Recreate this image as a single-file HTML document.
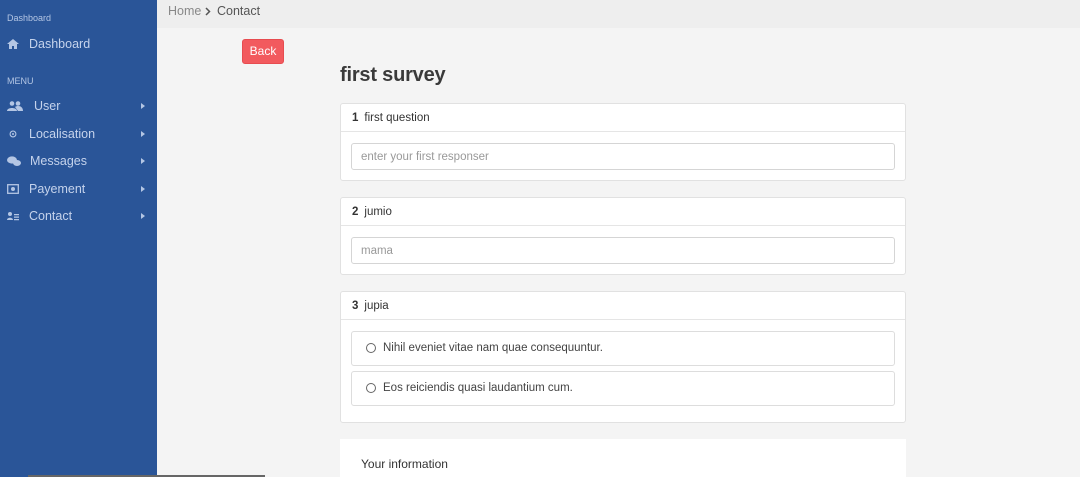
<!DOCTYPE html>
<html><head><style>
*{box-sizing:border-box;margin:0;padding:0}
html,body{width:1080px;height:477px;overflow:hidden}
body{background:#f4f4f4;font-family:"Liberation Sans",sans-serif;position:relative;color:#444}
.sb{position:absolute;left:0;top:0;width:157px;height:477px;background:#2a5598;color:#b4c6e4}
.sb .h{position:absolute;left:7px;font-size:9px}
.it{position:absolute;left:0;width:157px;font-size:12.5px;color:#c5d3ec}
.it .ic{position:absolute;left:7px;top:2px;width:12px;height:10px}
.it .t{position:absolute;left:29px;top:0}
.it .a{position:absolute;left:141px;top:4px;width:0;height:0;border-left:4px solid #b4c6e4;border-top:3.5px solid transparent;border-bottom:3.5px solid transparent}
.top{position:absolute;left:157px;top:0;right:0;height:28px;background:#eeeeee;font-size:12.5px}
.back{position:absolute;left:242px;top:39px;width:42px;height:25px;background:#f25a5e;border-radius:3px;color:#fff;font-size:12px;text-align:center;line-height:23px;border:1px solid #e74c50}
h1{position:absolute;left:340px;top:64px;font-size:20px;font-weight:bold;color:#3a3a3a;letter-spacing:-0.2px}
.card{position:absolute;left:340px;width:566px;background:#fff;border:1px solid #e1e1e1;border-radius:3px}
.ch{height:28px;border-bottom:1px solid #e5e5e5;font-size:11.5px;line-height:28px;padding-left:11px;color:#333}
.ch b{margin-right:6px}
.inp{position:absolute;left:10px;width:544px;height:27px;border:1px solid #d5d5d5;border-radius:3px;font-size:11.5px;color:#999;line-height:27px;padding-left:9px}
.opt{position:absolute;left:10px;width:544px;height:35px;border:1px solid #ddd;border-radius:3px;font-size:11.5px;color:#444;line-height:33px;padding-left:31px}
.opt:before{content:"";position:absolute;left:14px;top:11px;width:8px;height:8px;border:1px solid #666;border-radius:50%}
</style></head><body>
<div class="sb">
<div class="h" style="top:13px">Dashboard</div>
<div class="it" style="top:37px"><svg class="ic" viewBox="0 0 12 10"><path d="M6 0L0 5h2v5h3V7h2v3h3V5h2z" fill="#b4c6e4"/></svg><span class="t">Dashboard</span></div>
<div class="h" style="top:76px">MENU</div>
<div class="it" style="top:99px"><svg class="ic" style="width:16px" viewBox="0 0 16 10"><circle cx="5" cy="2.5" r="2.3" fill="#b4c6e4"/><circle cx="11" cy="2.5" r="2.3" fill="#b4c6e4"/><path d="M0 10c0-4 10-4 10 0zM8 6c3-2 8-1 8 4h-5z" fill="#b4c6e4"/></svg><span class="t" style="left:34px">User</span><i class="a"></i></div>
<div class="it" style="top:127px"><svg class="ic" viewBox="0 0 12 12"><circle cx="6" cy="6" r="3.5" stroke="#b4c6e4" fill="none" stroke-width="1.3"/><circle cx="6" cy="6" r="1.2" fill="#b4c6e4"/></svg><span class="t">Localisation</span><i class="a"></i></div>
<div class="it" style="top:154px"><svg class="ic" style="width:14px" viewBox="0 0 14 10"><ellipse cx="5" cy="4" rx="5" ry="3.6" fill="#b4c6e4"/><ellipse cx="10" cy="7" rx="4" ry="3" fill="#b4c6e4"/></svg><span class="t" style="left:30px">Messages</span><i class="a"></i></div>
<div class="it" style="top:182px"><svg class="ic" viewBox="0 0 12 10"><rect x="0.7" y="0.7" width="10.6" height="8.6" stroke="#b4c6e4" fill="none" stroke-width="1.3"/><circle cx="6" cy="5" r="2" fill="#b4c6e4"/></svg><span class="t">Payement</span><i class="a"></i></div>
<div class="it" style="top:209px"><svg class="ic" viewBox="0 0 12 10"><circle cx="3" cy="3" r="2" fill="#b4c6e4"/><path d="M0 9c0-3 6-3 6 0z M7 3h5v1.3H7zM7 5.5h5v1.3H7zM7 8h5v1.3H7z" fill="#b4c6e4"/></svg><span class="t">Contact</span><i class="a"></i></div>
</div>
<div class="top"><span style="position:absolute;left:11px;top:4px;color:#888">Home</span><svg style="position:absolute;left:48px;top:7px" width="6" height="9" viewBox="0 0 6 9"><path d="M1 1l3.5 3.5L1 8" stroke="#555" stroke-width="1.5" fill="none"/></svg><span style="position:absolute;left:60px;top:4px;color:#555">Contact</span></div>
<div class="back">Back</div>
<h1>first survey</h1>
<div class="card" style="top:103px;height:78px"><div class="ch"><b>1</b>first question</div><div class="inp" style="top:39px">enter your first responser</div></div>
<div class="card" style="top:197px;height:78px"><div class="ch"><b>2</b>jumio</div><div class="inp" style="top:39px">mama</div></div>
<div class="card" style="top:291px;height:132px"><div class="ch"><b>3</b>jupia</div><div class="opt" style="top:39px">Nihil eveniet vitae nam quae consequuntur.</div><div class="opt" style="top:79px">Eos reiciendis quasi laudantium cum.</div></div>
<div style="position:absolute;left:340px;top:439px;width:566px;height:38px;background:#fff;font-size:12px;color:#333;padding:18px 0 0 21px">Your information</div>
<div style="position:absolute;left:28px;top:475px;width:237px;height:2px;background:#666"></div>
</body></html>
